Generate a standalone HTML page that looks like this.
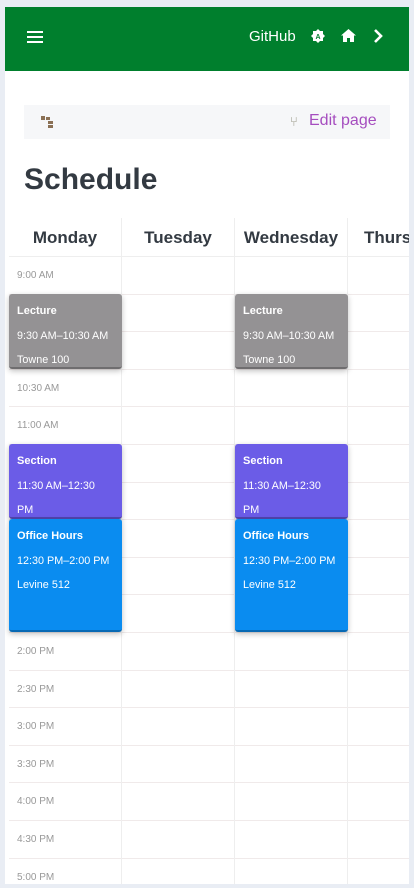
<!DOCTYPE html><html><head><style>
*{box-sizing:border-box;margin:0;padding:0}
body{width:414px;height:888px;background:#e9edf4;font-family:"Liberation Sans",sans-serif;position:relative;overflow:hidden}
.page{position:absolute;left:5px;top:7px;width:404px;height:877px;background:#fff;overflow:hidden}
.hdr{height:64px;background:#007f2d;position:relative;color:#fff}
.bc{position:absolute;left:19px;top:98px;width:366px;height:34px;background:#f6f7f9}
h1{position:absolute;left:19px;top:156px;font-size:30px;color:#333a42;font-weight:bold}
.grid{position:absolute;left:4px;top:211px}
.col{position:absolute;top:0;width:113px;border-right:1px solid #eee}
.dh{height:39px;border-bottom:1px solid #eee;text-align:center;font-weight:bold;font-size:17px;color:#333a42;line-height:40px;white-space:nowrap}
.cell{height:37.6px;border-bottom:1px solid #f0eaea;font-size:10px;color:#999;padding:13px 0 0 8px}
.ev{position:absolute;left:0;width:113px;border-radius:3px;color:#fff;padding:5px 8px;font-size:10.8px;line-height:24.5px;box-shadow:0 2px 6px rgba(0,0,0,.25);border-bottom:2px solid rgba(0,0,0,.25)}
.ev b{display:block;font-size:11px}
</style></head><body><div class="page">
<div class="hdr">
<svg style="position:absolute;left:22px;top:24px" width="16" height="13"><rect y="0" width="16" height="2" fill="#fff"/><rect y="5" width="16" height="2" fill="#fff"/><rect y="10" width="16" height="2" fill="#fff"/></svg>
<span style="position:absolute;left:244px;top:21px;font-size:15px">GitHub</span>
<svg style="position:absolute;left:306px;top:22px" width="14" height="14" viewBox="0 0 14 14"><polygon points="7,0 9,2 12,2 12,5 14,7 12,9 12,12 9,12 7,14 5,12 2,12 2,9 0,7 2,5 2,2 5,2" fill="#fff"/><text x="7" y="10" font-size="7" text-anchor="middle" fill="#007f2d" font-weight="bold">A</text></svg>
<svg style="position:absolute;left:336px;top:22px" width="15" height="13" viewBox="0 0 15 13"><path d="M7.5 0L0 6.5h2V13h4V9h3v4h4V6.5h2z" fill="#fff"/></svg>
<svg style="position:absolute;left:368px;top:21px" width="10" height="16" viewBox="0 0 10 16"><path d="M2 2l6 6-6 6" stroke="#fff" stroke-width="2.6" fill="none"/></svg>
</div>
<div class="bc">
<svg style="position:absolute;left:17px;top:11px" width="14" height="12"><rect x="0" y="0" width="4" height="4" fill="#8a7055"/><rect x="5" y="1" width="4" height="3" fill="#8a7055"/><rect x="7" y="5" width="5" height="3" fill="#8a7055"/><rect x="7" y="9" width="5" height="3" fill="#8a7055"/></svg>
<span style="position:absolute;left:266px;top:9px;color:#998;font-size:13px">⑂</span>
<span style="position:absolute;left:285px;top:7px;color:#a54dbf;font-size:16px">Edit page</span>
</div>
<h1>Schedule</h1>
<div class="grid">
<div class="col" style="left:0"><div class="dh">Monday</div>
<div class="cell">9:00 AM</div><div class="cell"></div><div class="cell"></div><div class="cell">10:30 AM</div><div class="cell">11:00 AM</div><div class="cell"></div><div class="cell"></div><div class="cell"></div><div class="cell"></div><div class="cell"></div><div class="cell">2:00 PM</div><div class="cell">2:30 PM</div><div class="cell">3:00 PM</div><div class="cell">3:30 PM</div><div class="cell">4:00 PM</div><div class="cell">4:30 PM</div><div class="cell">5:00 PM</div></div>
<div class="col" style="left:113px"><div class="dh">Tuesday</div>
<div class="cell"></div><div class="cell"></div><div class="cell"></div><div class="cell"></div><div class="cell"></div><div class="cell"></div><div class="cell"></div><div class="cell"></div><div class="cell"></div><div class="cell"></div><div class="cell"></div><div class="cell"></div><div class="cell"></div><div class="cell"></div><div class="cell"></div><div class="cell"></div><div class="cell"></div></div>
<div class="col" style="left:226px"><div class="dh">Wednesday</div>
<div class="cell"></div><div class="cell"></div><div class="cell"></div><div class="cell"></div><div class="cell"></div><div class="cell"></div><div class="cell"></div><div class="cell"></div><div class="cell"></div><div class="cell"></div><div class="cell"></div><div class="cell"></div><div class="cell"></div><div class="cell"></div><div class="cell"></div><div class="cell"></div><div class="cell"></div></div>
<div class="col" style="left:339px;width:80px;border:none"><div class="dh" style="text-align:left;padding-left:16px">Thursday</div>
<div class="cell"></div><div class="cell"></div><div class="cell"></div><div class="cell"></div><div class="cell"></div><div class="cell"></div><div class="cell"></div><div class="cell"></div><div class="cell"></div><div class="cell"></div><div class="cell"></div><div class="cell"></div><div class="cell"></div><div class="cell"></div><div class="cell"></div><div class="cell"></div><div class="cell"></div></div>
<div class="ev" style="top:76px;height:75px;background:#949294"><b>Lecture</b><div>9:30 AM–10:30 AM</div><div>Towne 100</div></div>
<div class="ev" style="left:226px;top:76px;height:75px;background:#949294"><b>Lecture</b><div>9:30 AM–10:30 AM</div><div>Towne 100</div></div>
<div class="ev" style="top:226px;height:75px;background:#6b5ce7"><b>Section</b><div>11:30 AM–12:30 PM</div></div>
<div class="ev" style="left:226px;top:226px;height:75px;background:#6b5ce7"><b>Section</b><div>11:30 AM–12:30 PM</div></div>
<div class="ev" style="top:301px;height:113px;background:#0a8cf0"><b>Office Hours</b><div>12:30 PM–2:00 PM</div><div>Levine 512</div></div>
<div class="ev" style="left:226px;top:301px;height:113px;background:#0a8cf0"><b>Office Hours</b><div>12:30 PM–2:00 PM</div><div>Levine 512</div></div>
</div>
</div></body></html>
